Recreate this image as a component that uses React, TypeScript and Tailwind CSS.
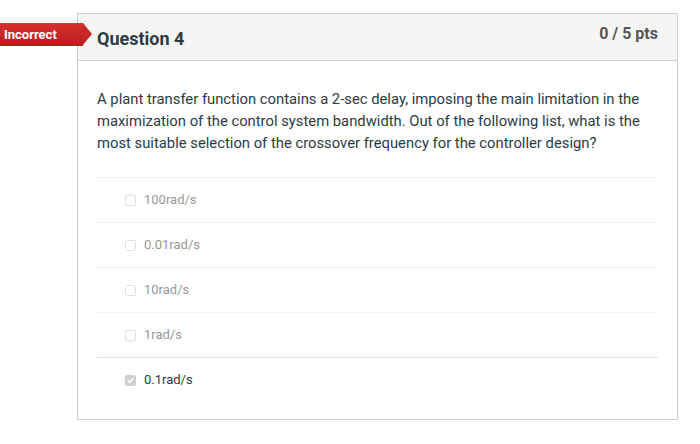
const answers = [
  { label: '100rad/s', picked: false },
  { label: '0.01rad/s', picked: false },
  { label: '10rad/s', picked: false },
  { label: '1rad/s', picked: false },
  { label: '0.1rad/s', picked: true },
];

const Box = ({ checked }: { checked: boolean }) =>
  checked ? (
    <span className="flex h-[11px] w-[11px] items-center justify-center rounded-[2px] bg-[#cfcfcf]">
      <svg viewBox="0 0 12 12" className="h-[9px] w-[9px]" fill="none" stroke="#fff" strokeWidth={2}>
        <path d="M2.5 6.2l2.4 2.4 4.6-5" strokeLinecap="round" strokeLinejoin="round" />
      </svg>
    </span>
  ) : (
    <span className="h-[11px] w-[11px] rounded-[2px] border border-[#e0e0e0] bg-white" />
  );

export default function App() {
  return (
    <div className="relative min-h-[444px] w-[700px] bg-white font-['Roboto',sans-serif]">
      {/* result flag */}
      <div className="absolute left-0 top-[23px] z-10 flex h-[23px]">
        <div className="flex w-[83px] items-center bg-gradient-to-b from-[#d8302e] to-[#b71c1c] pl-[4px] text-[13px] font-bold text-white">
          Incorrect
        </div>
        <div className="h-0 w-0 border-y-[11.5px] border-l-[9px] border-y-transparent border-l-[#c62828]" />
      </div>

      <div className="absolute left-[77px] top-[13px] w-[601px] border border-[#c7cdd1]">
        <div className="flex h-[47px] items-center justify-between border-b border-[#c7cdd1] bg-[#f5f5f5] px-[19px] pt-[2px]">
          <h2 className="text-[18px] font-bold text-[#2d3b45]">Question 4</h2>
          <span className="-mt-[8px] text-[16px] font-bold text-[#555]">0 / 5 pts</span>
        </div>
        <div className="px-[19px] pb-[17px] pt-[27px]">
          <p className="text-[14.8px] leading-[22px] text-[#2d3b45]">
            A plant transfer function contains a 2-sec delay, imposing the main limitation in the maximization of the
            control system bandwidth. Out of the following list, what is the most suitable selection of the crossover
            frequency for the controller design?
          </p>
          <div className="mt-[23px]">
            {answers.map((a) => (
              <div
                key={a.label}
                className={`flex h-[45px] items-center gap-[8px] border-t pl-[28px] text-[13px] ${
                  a.picked ? 'border-[#e2e2e2] text-[#2d3b45]' : 'border-[#f0f0f0] text-[#999]'
                }`}
              >
                <Box checked={a.picked} />
                <span>{a.label}</span>
              </div>
            ))}
          </div>
        </div>
      </div>
    </div>
  );
}
